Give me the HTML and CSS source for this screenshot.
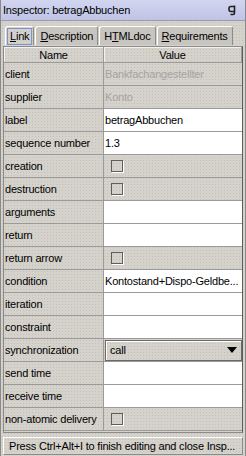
FILE: index.html
```html
<!DOCTYPE html>
<html lang="en">
<head>
	<meta charset="UTF-8">
	<title>Inspector: betragAbbuchen</title>
	<link rel="stylesheet" href="styles.css">
</head>
<body>
	<div class="window">
		<div class="title-bar">
			<span class="title-text">Inspector: betragAbbuchen</span>
			<svg class="pin-icon" width="9" height="11" viewBox="0 0 9 11">
				<path d="M6.5 1.5 H3 Q1 1.5 1 3.5 V4.5 Q1 6.5 3 6.5 H6.5 M6.5 0.5 V8 Q6.5 9.5 5 9.5 H2.5" fill="none" stroke="#202020" stroke-width="1.6"/>
			</svg>
		</div>
		<div class="tab-row">
			<span class="tab selected"><span class="focus"><u>L</u>ink</span></span>
			<span class="tab"><u>D</u>escription</span>
			<span class="tab">H<u>T</u>MLdoc</span>
			<span class="tab"><u>R</u>equirements</span>
		</div>
		<div class="table-frame">
			<table class="props">
				<tr class="head"><th class="name-col">Name</th><th>Value</th></tr>
				<tr><td>client</td><td class="disabled">Bankfachangestellter</td></tr>
				<tr><td>supplier</td><td class="disabled">Konto</td></tr>
				<tr><td>label</td><td class="edit">betragAbbuchen</td></tr>
				<tr><td>sequence number</td><td class="edit">1.3</td></tr>
				<tr><td>creation</td><td><span class="check"></span></td></tr>
				<tr><td>destruction</td><td><span class="check"></span></td></tr>
				<tr><td>arguments</td><td class="edit"></td></tr>
				<tr><td>return</td><td class="edit"></td></tr>
				<tr><td>return arrow</td><td><span class="check"></span></td></tr>
				<tr><td>condition</td><td class="edit">Kontostand+Dispo-Geldbe...</td></tr>
				<tr><td>iteration</td><td class="edit"></td></tr>
				<tr><td>constraint</td><td class="edit"></td></tr>
				<tr><td>synchronization</td><td class="combo-cell"><div class="combo"><span>call</span><span class="arrow"></span></div></td></tr>
				<tr><td>send time</td><td class="edit"></td></tr>
				<tr><td>receive time</td><td class="edit"></td></tr>
				<tr><td>non-atomic delivery</td><td><span class="check"></span></td></tr>
			</table>
		</div>
		<div class="status-bar">Press Ctrl+Alt+I to finish editing and close Insp...</div>
	</div>
</body>
</html>
```

FILE: styles.css
```css
body {
	margin: 0;
	font-family: "Liberation Sans", Arial, sans-serif;
	font-size: 11px;
	letter-spacing: -0.2px;
	color: #000000;
}
.window {
	width: 246px;
	height: 456px;
	box-sizing: border-box;
	border-left: 1px solid #8a8a8a;
	border-right: 1px solid #8a8a8a;
	background-color: #d5d2cc;
	background-image: radial-gradient(#c4c1ba 0.6px, transparent 0.9px);
	background-size: 3px 3px;
	overflow: hidden;
}
.title-bar {
	height: 20px;
	display: flex;
	align-items: center;
	justify-content: space-between;
	padding: 0 8px 0 2px;
	background: linear-gradient(#d2d5ef, #bfc4e6);
	border-bottom: 1px solid #9a9ab4;
}
.pin-icon {
	display: block;
}
.tab-row {
	display: flex;
	margin-top: 5px;
	padding-left: 4px;
	height: 19px;
	gap: 1px;
}
.tab {
	display: flex;
	align-items: center;
	padding: 0 4px;
	border: 1px solid #8c8c8c;
	border-bottom: none;
	border-top-color: #ffffff;
	border-left-color: #ffffff;
	border-radius: 3px 3px 0 0;
	background: #c8c5c0;
}
.tab.selected {
	padding: 0 1px;
	background: transparent;
}
.focus {
	border: 1px solid #7b93d6;
	padding: 1px 2px;
	line-height: 13px;
}
.table-frame {
	margin: 1px 2px 0 2px;
	border: 1px solid #8a8a8a;
	border-right-color: #5c5c5c;
	padding-bottom: 1px;
}
.props {
	width: 100%;
	border-collapse: collapse;
	table-layout: fixed;
}
.props th {
	height: 15px;
	font-weight: normal;
	border: 1px solid #9a9a9a;
	border-top: none;
	box-shadow: inset 1px 1px 0 #f2f2f2;
	padding: 0;
}
.props th.name-col {
	width: 99px;
	border-left: none;
}
.props td {
	height: 22px;
	padding: 0 0 0 1px;
	border: 1px solid #9a9a9a;
	white-space: nowrap;
	overflow: hidden;
}
.props td:first-child {
	border-left: none;
}
.props td:last-child {
	border-right: none;
}
.props td.disabled {
	color: #a5a3a0;
}
.props td.edit {
	background: #ffffff;
}
.check {
	display: block;
	width: 10px;
	height: 10px;
	margin-left: 6px;
	border: 1px solid #5e5e5e;
	box-shadow: 1px 1px 0 #ffffff;
}
.combo-cell {
	padding: 0 !important;
}
.combo {
	display: flex;
	align-items: center;
	justify-content: space-between;
	height: 19px;
	margin-left: 1px;
	padding: 0 4px 0 4px;
	border: 1px solid #6a6a6a;
	box-shadow: inset 1px 1px 0 #ffffff;
}
.arrow {
	width: 0;
	height: 0;
	border-left: 5px solid transparent;
	border-right: 5px solid transparent;
	border-top: 6px solid #000000;
}
.status-bar {
	margin: 4px 2px 0 2px;
	height: 16px;
	line-height: 16px;
	padding-left: 5px;
	border: 1px solid #8a8a8a;
	border-top-color: #ffffff;
	border-left-color: #ffffff;
	white-space: nowrap;
	overflow: hidden;
}
```
